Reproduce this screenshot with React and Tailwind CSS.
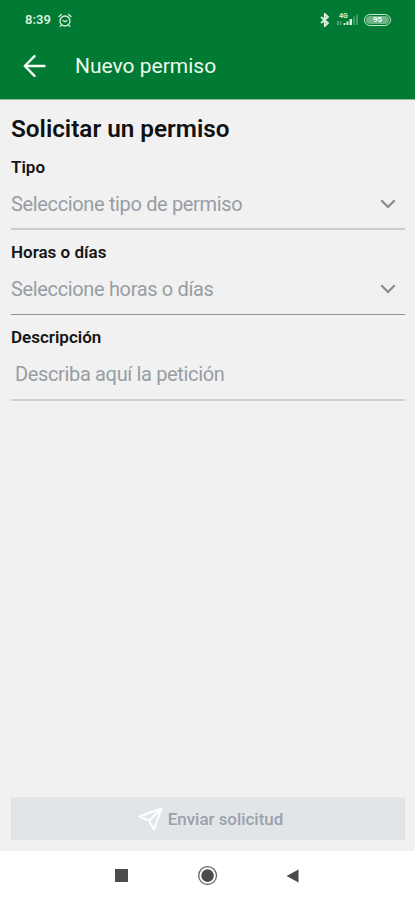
import React from 'react';

function StatusBar() {
  return (
    <div className="flex h-[38px] items-center justify-between pl-[25px] pr-[24px] pt-[2px] text-[#d9f0df]">
      <div className="flex items-center gap-[7px]">
        <span className="text-[13px] font-semibold leading-4">8:39</span>
        <svg width="14" height="15" viewBox="0 0 14 15" fill="none" stroke="currentColor" strokeWidth="1.3" strokeLinecap="round">
          <circle cx="7" cy="8" r="5" />
          <path d="M1 3.6 3.4 1.5M13 3.6 10.6 1.5M3 12.3 2.2 13.5M11 12.3l.8 1.2M5 7.5l2 1.3 2-1.3" />
        </svg>
      </div>
      <div className="flex items-center">
        <svg width="10" height="14" viewBox="0 0 10 14" fill="none" stroke="currentColor" strokeWidth="1.8">
          <path d="M1 4l7 6-3.2 3V1L8 4 1 10" />
        </svg>
        <div className="relative ml-[7px] h-[14px] w-[22px]">
          <span className="absolute left-[2px] top-0 text-[7px] font-bold leading-[6px]">4G</span>
          <svg width="22" height="14" viewBox="0 0 22 14" fill="currentColor">
            <path d="M0 8h2v4H0zM3 8h1.5v4H3z" opacity=".35" />
            <path d="M6.5 10h2v2h-2zM9.5 8.5h2V12h-2zM12.5 6h2.5v6h-2.5z" />
            <path d="M16 3.5h2V12h-2zM19 1.5h2V12h-2z" opacity=".3" />
          </svg>
        </div>
        <div className="ml-[5px] flex h-[12px] w-[27px] items-center justify-center rounded-full border-[1.5px] border-[#c4e6cc] p-px">
          <span className="flex h-[8px] w-full items-center justify-center rounded-full bg-[#6fb483] text-[8px] font-bold leading-[8px] text-white">95</span>
        </div>
      </div>
    </div>
  );
}

function Header() {
  return (
    <header className="h-[100px] border-b border-[#8fc09b] bg-[#017b34]">
      <StatusBar />
      <div className="flex h-[56px] items-center pl-[23px]">
        <svg width="23" height="22" viewBox="0 0 23 22" fill="none" stroke="#f4fbf5" strokeWidth="2.4" strokeLinecap="round" strokeLinejoin="round">
          <path d="M21.5 11H1.8M11.5 1.2 1.8 11l9.7 9.8" />
        </svg>
        <h1 className="ml-[29px] text-[21px] leading-7 text-[#edf8ef]">Nuevo permiso</h1>
      </div>
    </header>
  );
}

function Chevron() {
  return (
    <svg className="mr-[9px]" width="16" height="10" viewBox="0 0 16 10" fill="none" stroke="#858a90" strokeWidth="2.1">
      <path d="M1.3 1.2 8 7.9l6.7-6.7" />
    </svg>
  );
}

function SelectField({ label, placeholder, lineClass }) {
  return (
    <div className="flex h-[85px] flex-col">
      <label className="text-[17px] font-semibold leading-6 text-[#151515]">{label}</label>
      <div className="flex h-[49px] items-center justify-between">
        <span className="pt-px text-[20px] leading-7 tracking-[-0.35px] text-[#979da4]">{placeholder}</span>
        <Chevron />
      </div>
      <div className={lineClass} />
    </div>
  );
}

export default function App() {
  return (
    <div className="flex h-[900px] w-[415px] flex-col overflow-hidden bg-[#f1f1f1] font-[Roboto,sans-serif]">
      <Header />
      <main className="flex flex-1 flex-col pl-[11px] pr-[10px] pt-[13px]">
        <h2 className="mb-[10px] text-[24.3px] font-semibold leading-8 text-[#111]">Solicitar un permiso</h2>
        <SelectField label="Tipo" placeholder="Seleccione tipo de permiso" lineClass="h-[2px] bg-[#c9cdd1]" />
        <SelectField label="Horas o días" placeholder="Seleccione horas o días" lineClass="mt-px h-px bg-[#8c9297]" />
        <div className="flex flex-col">
          <label className="text-[17px] font-semibold leading-6 text-[#151515]">Descripción</label>
          <div className="flex h-[50px] items-center pb-px pl-[4px]">
            <span className="text-[20px] leading-7 tracking-[-0.35px] text-[#979da4]">Describa aquí la petición</span>
          </div>
          <div className="h-[2px] bg-[#cfd2d5]" />
        </div>
        <button className="mb-[11px] mt-auto flex h-[43px] items-center justify-center bg-[#e1e5e8] pl-[5px]">
          <svg width="25" height="24" viewBox="0 0 25 24" fill="none" stroke="#fdfefe" strokeWidth="2.1" strokeLinejoin="round">
            <path d="M23.5 1.5 1.5 9.5l9.5 4.3 5 8.7zM23.5 1.5 11 13.8" />
          </svg>
          <span className="ml-[5px] text-[16.9px] font-medium leading-6 text-[#9ba1ab]">Enviar solicitud</span>
        </button>
      </main>
      <nav className="flex h-[49px] items-center bg-white pl-[115px]">
        <div className="h-[13px] w-[13px] bg-[#4b4b4b]" />
        <svg className="ml-[70px]" width="20" height="20" viewBox="0 0 20 20">
          <circle cx="9.6" cy="9.6" r="8.9" fill="none" stroke="#666" strokeWidth="1.3" />
          <circle cx="9.6" cy="9.6" r="6.3" fill="#4b4b4b" />
        </svg>
        <svg className="ml-[68px]" width="13" height="14" viewBox="0 0 13 14" fill="#4b4b4b">
          <path d="M12.5.5v13L.5 7z" />
        </svg>
      </nav>
    </div>
  );
}
